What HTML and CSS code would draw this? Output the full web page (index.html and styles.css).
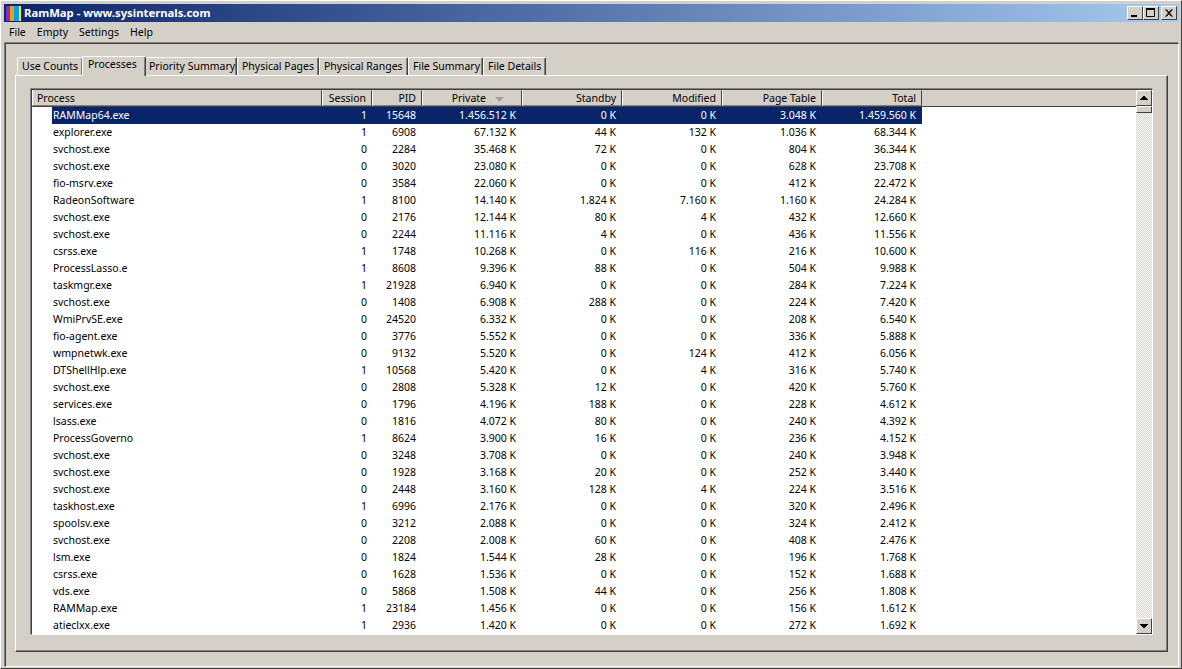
FILE: index.html
```html
<!DOCTYPE html>
<html lang="en">
<head>
<meta charset="utf-8">
<title>RamMap</title>
<link rel="stylesheet" href="styles.css">
</head>
<body>
<div class="window">
  <div class="titlebar">
    <svg class="appicon" width="15" height="15" viewBox="0 0 15 15"><rect x="0" width="4" height="15" fill="#7b2fd0"/><rect x="4" width="4" height="15" fill="#ff9a00"/><rect x="8" width="5" height="15" fill="#00a2e8"/><rect x="13" width="2" height="15" fill="#ffee00"/></svg>
    <span class="title">RamMap - www.sysinternals.com</span>
    <div class="caption-buttons">
      <span class="capbtn"><svg width="16" height="14" viewBox="0 0 16 14"><rect x="4" y="9" width="6" height="2" fill="#000"/></svg></span>
      <span class="capbtn"><svg width="16" height="14" viewBox="0 0 16 14"><path d="M3.500 2.500h8v8h-8z" fill="none" stroke="#000"/><rect x="3" y="2" width="9" height="2" fill="#000"/></svg></span>
      <span class="capbtn closebtn"><svg width="16" height="14" viewBox="0 0 16 14"><path d="M4.500 3.500l6 7M5.500 3.500l6 7M10.500 3.500l-6 7M11.500 3.500l-6 7" stroke="#000" stroke-width="1" fill="none"/></svg></span>
    </div>
  </div>
  <div class="menubar"><span>File</span><span>Empty</span><span>Settings</span><span>Help</span></div>
  <div class="client">
    <div class="tabs">
      <span class="tab t1">Use Counts</span>
      <span class="tab active t2">Processes</span>
      <span class="tab t3">Priority Summary</span>
      <span class="tab t4">Physical Pages</span>
      <span class="tab t5">Physical Ranges</span>
      <span class="tab t6">File Summary</span>
      <span class="tab t7">File Details</span>
    </div>
    <div class="pane">
      <div class="list">
        <div class="main">
          <div class="header">
            <span class="hc c-name left">Process</span>
            <span class="hc c-ses">Session</span>
            <span class="hc c-pid">PID</span>
            <span class="hc c-big sort">Private<svg class="arrow" width="9" height="5" viewBox="0 0 9 5"><path d="M0 0h9L4.500 5z" fill="#a0a0a0"/></svg></span>
            <span class="hc c-big">Standby</span>
            <span class="hc c-big">Modified</span>
            <span class="hc c-big">Page Table</span>
            <span class="hc c-big">Total</span>
            <span class="hc-rest"></span>
          </div>
          <div class="rows">
            <div class="row selected"><span class="name">RAMMap64.exe</span><span class="ses">1</span><span class="pid">15648</span><span class="big">1.456.512 K</span><span class="big">0 K</span><span class="big">0 K</span><span class="big">3.048 K</span><span class="big">1.459.560 K</span></div>
            <div class="row"><span class="name">explorer.exe</span><span class="ses">1</span><span class="pid">6908</span><span class="big">67.132 K</span><span class="big">44 K</span><span class="big">132 K</span><span class="big">1.036 K</span><span class="big">68.344 K</span></div>
            <div class="row"><span class="name">svchost.exe</span><span class="ses">0</span><span class="pid">2284</span><span class="big">35.468 K</span><span class="big">72 K</span><span class="big">0 K</span><span class="big">804 K</span><span class="big">36.344 K</span></div>
            <div class="row"><span class="name">svchost.exe</span><span class="ses">0</span><span class="pid">3020</span><span class="big">23.080 K</span><span class="big">0 K</span><span class="big">0 K</span><span class="big">628 K</span><span class="big">23.708 K</span></div>
            <div class="row"><span class="name">fio-msrv.exe</span><span class="ses">0</span><span class="pid">3584</span><span class="big">22.060 K</span><span class="big">0 K</span><span class="big">0 K</span><span class="big">412 K</span><span class="big">22.472 K</span></div>
            <div class="row"><span class="name">RadeonSoftware</span><span class="ses">1</span><span class="pid">8100</span><span class="big">14.140 K</span><span class="big">1.824 K</span><span class="big">7.160 K</span><span class="big">1.160 K</span><span class="big">24.284 K</span></div>
            <div class="row"><span class="name">svchost.exe</span><span class="ses">0</span><span class="pid">2176</span><span class="big">12.144 K</span><span class="big">80 K</span><span class="big">4 K</span><span class="big">432 K</span><span class="big">12.660 K</span></div>
            <div class="row"><span class="name">svchost.exe</span><span class="ses">0</span><span class="pid">2244</span><span class="big">11.116 K</span><span class="big">4 K</span><span class="big">0 K</span><span class="big">436 K</span><span class="big">11.556 K</span></div>
            <div class="row"><span class="name">csrss.exe</span><span class="ses">1</span><span class="pid">1748</span><span class="big">10.268 K</span><span class="big">0 K</span><span class="big">116 K</span><span class="big">216 K</span><span class="big">10.600 K</span></div>
            <div class="row"><span class="name">ProcessLasso.e</span><span class="ses">1</span><span class="pid">8608</span><span class="big">9.396 K</span><span class="big">88 K</span><span class="big">0 K</span><span class="big">504 K</span><span class="big">9.988 K</span></div>
            <div class="row"><span class="name">taskmgr.exe</span><span class="ses">1</span><span class="pid">21928</span><span class="big">6.940 K</span><span class="big">0 K</span><span class="big">0 K</span><span class="big">284 K</span><span class="big">7.224 K</span></div>
            <div class="row"><span class="name">svchost.exe</span><span class="ses">0</span><span class="pid">1408</span><span class="big">6.908 K</span><span class="big">288 K</span><span class="big">0 K</span><span class="big">224 K</span><span class="big">7.420 K</span></div>
            <div class="row"><span class="name">WmiPrvSE.exe</span><span class="ses">0</span><span class="pid">24520</span><span class="big">6.332 K</span><span class="big">0 K</span><span class="big">0 K</span><span class="big">208 K</span><span class="big">6.540 K</span></div>
            <div class="row"><span class="name">fio-agent.exe</span><span class="ses">0</span><span class="pid">3776</span><span class="big">5.552 K</span><span class="big">0 K</span><span class="big">0 K</span><span class="big">336 K</span><span class="big">5.888 K</span></div>
            <div class="row"><span class="name">wmpnetwk.exe</span><span class="ses">0</span><span class="pid">9132</span><span class="big">5.520 K</span><span class="big">0 K</span><span class="big">124 K</span><span class="big">412 K</span><span class="big">6.056 K</span></div>
            <div class="row"><span class="name">DTShellHlp.exe</span><span class="ses">1</span><span class="pid">10568</span><span class="big">5.420 K</span><span class="big">0 K</span><span class="big">4 K</span><span class="big">316 K</span><span class="big">5.740 K</span></div>
            <div class="row"><span class="name">svchost.exe</span><span class="ses">0</span><span class="pid">2808</span><span class="big">5.328 K</span><span class="big">12 K</span><span class="big">0 K</span><span class="big">420 K</span><span class="big">5.760 K</span></div>
            <div class="row"><span class="name">services.exe</span><span class="ses">0</span><span class="pid">1796</span><span class="big">4.196 K</span><span class="big">188 K</span><span class="big">0 K</span><span class="big">228 K</span><span class="big">4.612 K</span></div>
            <div class="row"><span class="name">lsass.exe</span><span class="ses">0</span><span class="pid">1816</span><span class="big">4.072 K</span><span class="big">80 K</span><span class="big">0 K</span><span class="big">240 K</span><span class="big">4.392 K</span></div>
            <div class="row"><span class="name">ProcessGoverno</span><span class="ses">1</span><span class="pid">8624</span><span class="big">3.900 K</span><span class="big">16 K</span><span class="big">0 K</span><span class="big">236 K</span><span class="big">4.152 K</span></div>
            <div class="row"><span class="name">svchost.exe</span><span class="ses">0</span><span class="pid">3248</span><span class="big">3.708 K</span><span class="big">0 K</span><span class="big">0 K</span><span class="big">240 K</span><span class="big">3.948 K</span></div>
            <div class="row"><span class="name">svchost.exe</span><span class="ses">0</span><span class="pid">1928</span><span class="big">3.168 K</span><span class="big">20 K</span><span class="big">0 K</span><span class="big">252 K</span><span class="big">3.440 K</span></div>
            <div class="row"><span class="name">svchost.exe</span><span class="ses">0</span><span class="pid">2448</span><span class="big">3.160 K</span><span class="big">128 K</span><span class="big">4 K</span><span class="big">224 K</span><span class="big">3.516 K</span></div>
            <div class="row"><span class="name">taskhost.exe</span><span class="ses">1</span><span class="pid">6996</span><span class="big">2.176 K</span><span class="big">0 K</span><span class="big">0 K</span><span class="big">320 K</span><span class="big">2.496 K</span></div>
            <div class="row"><span class="name">spoolsv.exe</span><span class="ses">0</span><span class="pid">3212</span><span class="big">2.088 K</span><span class="big">0 K</span><span class="big">0 K</span><span class="big">324 K</span><span class="big">2.412 K</span></div>
            <div class="row"><span class="name">svchost.exe</span><span class="ses">0</span><span class="pid">2208</span><span class="big">2.008 K</span><span class="big">60 K</span><span class="big">0 K</span><span class="big">408 K</span><span class="big">2.476 K</span></div>
            <div class="row"><span class="name">lsm.exe</span><span class="ses">0</span><span class="pid">1824</span><span class="big">1.544 K</span><span class="big">28 K</span><span class="big">0 K</span><span class="big">196 K</span><span class="big">1.768 K</span></div>
            <div class="row"><span class="name">csrss.exe</span><span class="ses">0</span><span class="pid">1628</span><span class="big">1.536 K</span><span class="big">0 K</span><span class="big">0 K</span><span class="big">152 K</span><span class="big">1.688 K</span></div>
            <div class="row"><span class="name">vds.exe</span><span class="ses">0</span><span class="pid">5868</span><span class="big">1.508 K</span><span class="big">44 K</span><span class="big">0 K</span><span class="big">256 K</span><span class="big">1.808 K</span></div>
            <div class="row"><span class="name">RAMMap.exe</span><span class="ses">1</span><span class="pid">23184</span><span class="big">1.456 K</span><span class="big">0 K</span><span class="big">0 K</span><span class="big">156 K</span><span class="big">1.612 K</span></div>
            <div class="row"><span class="name">atieclxx.exe</span><span class="ses">1</span><span class="pid">2936</span><span class="big">1.420 K</span><span class="big">0 K</span><span class="big">0 K</span><span class="big">272 K</span><span class="big">1.692 K</span></div>
          </div>
        </div>
        <div class="scrollbar">
          <span class="sbtn"><svg width="8" height="4" viewBox="0 0 8 4"><path d="M3 0h2v1h1v1h1v1h1v1H0V3h1V2h1V1h1z" fill="#000"/></svg></span>
          <span class="thumb"></span>
          <svg class="track" aria-hidden="true"><defs><pattern id="dither" width="2" height="2" patternUnits="userSpaceOnUse"><rect width="2" height="2" fill="#fff"/><rect width="1" height="1" fill="#d4d0c8"/><rect x="1" y="1" width="1" height="1" fill="#d4d0c8"/></pattern></defs><rect width="100%" height="100%" fill="url(#dither)" shape-rendering="crispEdges"/></svg>
          <span class="sbtn"><svg width="8" height="4" viewBox="0 0 8 4"><path d="M0 0h8v1H7v1H6v1H5v1H3V3H2V2H1V1H0z" fill="#000"/></svg></span>
        </div>
      </div>
    </div>
  </div>
</div>
</body>
</html>
```
FILE: styles.css
```css
* { box-sizing: border-box; }
html, body { margin: 0; padding: 0; }
body { width: 1182px; height: 669px; overflow: hidden; background: #d4d0c8; font: 10.5px/13px "Noto Sans", "Liberation Sans", sans-serif; color: #000; }
.window { width: 1182px; height: 669px; padding: 3px 2px 2px 3px; border-top: 1px solid #fff; border-left: 1px solid #fff; border-right: 1px solid #404040; border-bottom: 1px solid #404040; background: #d4d0c8; display: flex; flex-direction: column; }
.titlebar { height: 18px; flex: none; display: flex; align-items: center; background: linear-gradient(90deg, #0a246a, #a6caf0); padding-left: 2px; padding-right: 2px; color: #fff; }
.appicon { flex: none; }
.title { margin-left: 3px; padding-bottom: 2px; font-family: "Noto Sans", sans-serif; font-weight: 700; font-size: 11.3px; flex: 1; white-space: nowrap; }
.caption-buttons { display: flex; }
.capbtn { width: 16px; height: 14px; background: #d4d0c8; border: 1px solid; border-color: #fff #404040 #404040 #fff; display: flex; align-items: center; justify-content: center; overflow: hidden; }
.capbtn svg { flex: none; }
.closebtn { margin-left: 2px; }
.menubar { height: 20px; flex: none; display: flex; align-items: center; padding: 0 0 0 5px; gap: 11px; }
.client { flex: 1; margin: 1px 0 0 1px; border: 1px solid; border-color: #404040 #fff #fff #404040; box-shadow: -1px -1px 0 #808080; padding: 11px 10px 14px 9px; display: flex; flex-direction: column; }
.tabs { height: 20px; flex: none; display: flex; align-items: flex-end; position: relative; padding-left: 2px; z-index: 1; }
.tab { height: 18px; border: 1px solid; border-color: #fff #404040 transparent #fff; border-bottom: none; border-radius: 2px 2px 0 0; box-shadow: inset -1px 0 #808080; padding: 2px 0 0 4px; white-space: nowrap; background: #d4d0c8; flex: none; }
.t1 { width: 66px; }
.t2 { width: 64px; height: 20px; margin: 0 -1px -1px -1px; padding-top: 1px; padding-left: 5px; z-index: 1; }
.t3 { width: 92px; padding-left: 3px; } .t4 { width: 82px; } .t5 { width: 89px; } .t6 { width: 75px; } .t7 { width: 63px; }
.pane { flex: 1; border: 1px solid; border-color: #fff #404040 #404040 #fff; box-shadow: inset -1px -1px 0 #808080; padding: 12px 14px 16px 14px; display: flex; }
.list { flex: 1; margin: 1px 0 0 1px; display: flex; border: 1px solid; border-color: #404040 #fff #fff #404040; box-shadow: -1px -1px 0 #808080; background: #fff; min-width: 0; }
.main { flex: 1; min-width: 0; display: flex; flex-direction: column; overflow: hidden; }
.header { height: 17px; flex: none; display: flex; background: #d4d0c8; border-bottom: 1px solid #404040; }
.hc { height: 16px; border: 1px solid; border-color: #d4d0c8 #404040 #808080 #fff; padding: 1px 5px 0 0; text-align: right; flex: none; }
.left { text-align: left; padding-left: 4px; }
.c-name { width: 290px; } .c-ses { width: 50px; } .c-pid { width: 50px; } .c-big { width: 100px; }
.sort { position: relative; padding-right: 35px; }
.arrow { position: absolute; right: 17px; top: 6px; }
.hc-rest { flex: 1; }
.rows { flex: 1; overflow: hidden; }
.row { height: 17px; display: flex; line-height: 17px; white-space: nowrap; }
.row span { flex: none; display: block; padding-right: 6px; text-align: right; overflow: hidden; }
.row .name { width: 270px; margin-left: 20px; padding: 0 0 0 1px; text-align: left; }
.row .ses { width: 50px; padding-right: 5px; } .row .pid { width: 50px; } .row .big { width: 100px; }
.selected { width: 890px; }
.selected span { background: #0a246a; color: #fff; }
.scrollbar { width: 16px; flex: none; display: flex; flex-direction: column; background: #d4d0c8; }
.sbtn { height: 16px; flex: none; background: #d4d0c8; border: 1px solid; border-color: #fff #404040 #404040 #fff; display: flex; align-items: center; justify-content: center; }
.thumb { height: 7px; flex: none; background: #d4d0c8; border: 1px solid; border-color: #fff #404040 #404040 #fff; }
.track { flex: 1; display: block; width: 16px; min-height: 0; }
```
